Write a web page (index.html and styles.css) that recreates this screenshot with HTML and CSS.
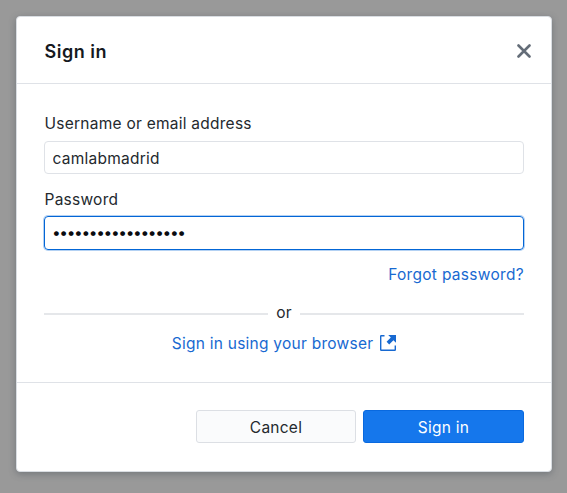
FILE: index.html
```html
<!DOCTYPE html>
<html lang="en">
<head>
<meta charset="utf-8">
<title>Sign in</title>
<link rel="stylesheet" href="styles.css">
</head>
<body>
<form class="dialog">
  <header class="dialog-header">
    <h1>Sign in</h1>
    <button class="close" type="button" aria-label="Close">
      <svg width="14" height="14" viewBox="0 0 14 14"><path d="M1.5 1.5L12.5 12.5M12.5 1.5L1.5 12.5"/></svg>
    </button>
  </header>
  <main class="dialog-body">
    <label for="user">Username or email address</label>
    <input id="user" type="text" value="camlabmadrid" spellcheck="false">
    <label for="pass">Password</label>
    <div id="pass" class="field focused">••••••••••••••••••</div>
    <a class="forgot">Forgot password?</a>
    <div class="divider"><span>or</span></div>
    <a class="browser-link"><span>Sign in using your browser</span>
      <svg width="18" height="18" viewBox="0 0 18 18"><path class="frame" d="M5.5 1.7H2.3Q1.7 1.7 1.7 2.3V15.7Q1.7 16.3 2.3 16.3H15.7Q16.3 16.3 16.3 15.7V11.5"/><path class="arrow" d="M9.2 1H17V8.8L14.4 6.2L10.2 10.4L7.6 7.8L11.8 3.6Z"/></svg>
    </a>
  </main>
  <footer class="dialog-footer">
    <button class="button" type="button">Cancel</button>
    <button class="button primary" type="button">Sign in</button>
  </footer>
</form>
</body>
</html>
```
FILE: styles.css
```css
* { box-sizing: border-box; }
body {
  margin: 0;
  padding: 16px 15px 21px 16px;
  height: 493px;
  overflow: hidden;
  background: #999;
  color: #24292e;
  font: 15.5px/22px Inter, sans-serif;
  letter-spacing: 0.25px;
}
.dialog {
  display: flex;
  flex-direction: column;
  height: 456px;
  background: #fff;
  border: 1px solid #d9dde2;
  border-radius: 4px;
  box-shadow: 0 2px 7px rgba(69, 77, 86, 0.45);
}
.dialog-header {
  display: flex;
  align-items: center;
  justify-content: space-between;
  height: 67px;
  padding: 2px 20px 0 27px;
  border-bottom: 1px solid #dfe2e7;
}
h1 {
  margin: 0;
  padding: 2px 0 0 0.5px;
  color: #15191e;
  font-size: 18px;
  font-weight: 600;
  line-height: 24px;
  letter-spacing: 0.5px;
}
.close { padding: 0; width: 14px; height: 14px; border: 0; background: none; }
.close svg { display: block; fill: none; stroke: #646d78; stroke-width: 2.6; stroke-linecap: round; }
.dialog-body {
  display: flex;
  flex-direction: column;
  flex: 1;
  padding: 29px 27px 0;
}
label { margin-bottom: 6px; padding-left: 0.5px; }
input, .field {
  height: 33px;
  margin-bottom: 15px;
  padding: 2px 7.5px 0;
  border: 1px solid #dfe2e7;
  border-radius: 4px;
  color: inherit;
  font: inherit;
  letter-spacing: inherit;
}
.focused {
  height: 34px;
  margin: -1px 0 13px;
  padding: 0 7px;
  border: 1.5px solid #0366d6;
  letter-spacing: -1.35px;
  line-height: 31px;
  color: #0a0c10;
  box-shadow: 0 0 0 1px rgba(3, 102, 214, 0.3);
}
a { color: #1769d1; }
.forgot { align-self: flex-end; padding-top: 1px; letter-spacing: 0.3px; }
.divider {
  display: flex;
  align-items: center;
  gap: 8px;
  margin-top: 16px;
}
.divider::before, .divider::after {
  content: "";
  flex: 1;
  height: 2px;
  background: #e5e7ea;
  transform: translateY(1px);
}
.browser-link {
  display: flex;
  align-items: center;
  justify-content: center;
  gap: 6px;
  margin-top: 9px;
  padding-left: 1px;
}
.browser-link svg { transform: translateY(-1px); }
.frame { fill: none; stroke: #1769d1; stroke-width: 1.4; }
.arrow { fill: #1769d1; }
.dialog-footer {
  display: flex;
  justify-content: flex-end;
  gap: 7px;
  height: 89px;
  padding: 27px 27px 0;
  border-top: 1px solid #dfe2e7;
}
.button {
  width: 161px;
  height: 33px;
  padding: 2px 0 0;
  border: 1px solid #dcdfe4;
  border-radius: 3px;
  background: #fafbfc;
  color: inherit;
  font: inherit;
  letter-spacing: inherit;
}
.button:first-child { width: 160px; }
.primary { border-color: #0969df; background: #1577ec; color: #fff; }
```
